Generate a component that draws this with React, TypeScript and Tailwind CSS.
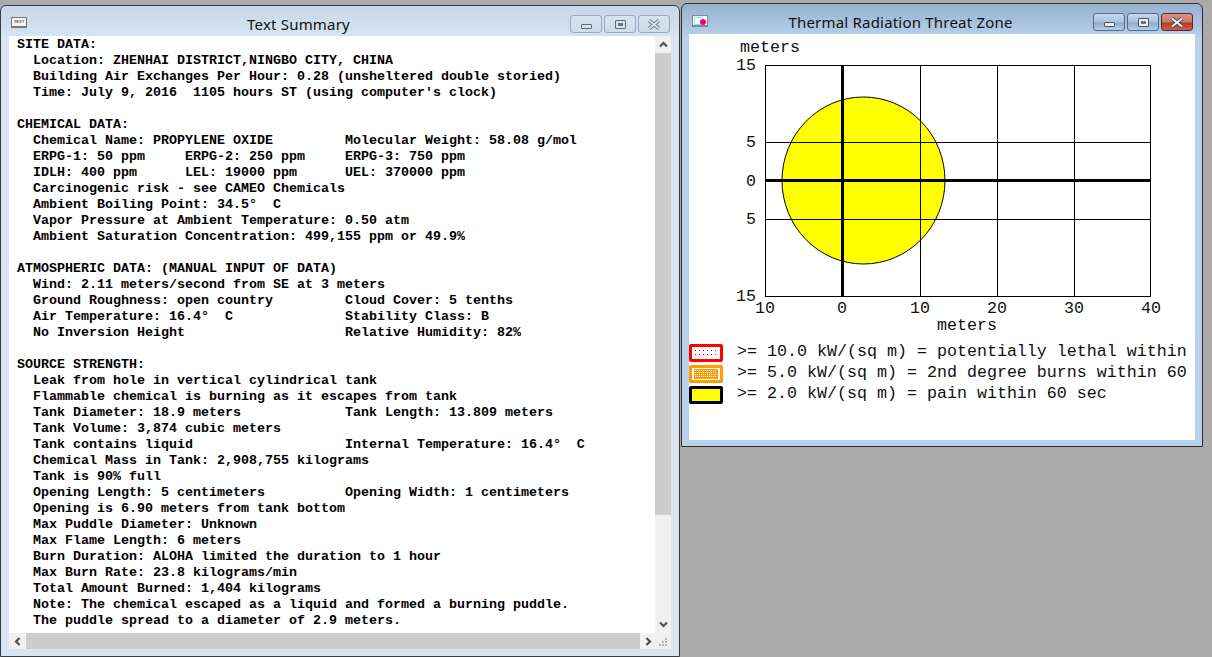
import type { ReactNode } from 'react';

const col = (a: string, b: string) => a.padEnd(41) + b;

const summary = [
  'SITE DATA:',
  '  Location: ZHENHAI DISTRICT,NINGBO CITY, CHINA',
  '  Building Air Exchanges Per Hour: 0.28 (unsheltered double storied)',
  "  Time: July 9, 2016  1105 hours ST (using computer's clock)",
  '',
  'CHEMICAL DATA:',
  col('  Chemical Name: PROPYLENE OXIDE', 'Molecular Weight: 58.08 g/mol'),
  col('  ERPG-1: 50 ppm     ERPG-2: 250 ppm', 'ERPG-3: 750 ppm'),
  col('  IDLH: 400 ppm      LEL: 19000 ppm', 'UEL: 370000 ppm'),
  '  Carcinogenic risk - see CAMEO Chemicals',
  '  Ambient Boiling Point: 34.5°  C',
  '  Vapor Pressure at Ambient Temperature: 0.50 atm',
  '  Ambient Saturation Concentration: 499,155 ppm or 49.9%',
  '',
  'ATMOSPHERIC DATA: (MANUAL INPUT OF DATA)',
  '  Wind: 2.11 meters/second from SE at 3 meters',
  col('  Ground Roughness: open country', 'Cloud Cover: 5 tenths'),
  col('  Air Temperature: 16.4°  C', 'Stability Class: B'),
  col('  No Inversion Height', 'Relative Humidity: 82%'),
  '',
  'SOURCE STRENGTH:',
  '  Leak from hole in vertical cylindrical tank',
  '  Flammable chemical is burning as it escapes from tank',
  col('  Tank Diameter: 18.9 meters', 'Tank Length: 13.809 meters'),
  '  Tank Volume: 3,874 cubic meters',
  col('  Tank contains liquid', 'Internal Temperature: 16.4°  C'),
  '  Chemical Mass in Tank: 2,908,755 kilograms',
  '  Tank is 90% full',
  col('  Opening Length: 5 centimeters', 'Opening Width: 1 centimeters'),
  '  Opening is 6.90 meters from tank bottom',
  '  Max Puddle Diameter: Unknown',
  '  Max Flame Length: 6 meters',
  '  Burn Duration: ALOHA limited the duration to 1 hour',
  '  Max Burn Rate: 23.8 kilograms/min',
  '  Total Amount Burned: 1,404 kilograms',
  '  Note: The chemical escaped as a liquid and formed a burning puddle.',
  '  The puddle spread to a diameter of 2.9 meters.',
];

function Chevron({ d }: { d: string }) {
  return (
    <svg width="9" height="9" viewBox="0 0 9 9" fill="none" stroke="#505050" strokeWidth="2.2">
      <path d={d} />
    </svg>
  );
}

function CaptionButton({ kind, active }: { kind: 'min' | 'max' | 'close'; active: boolean }) {
  const surface =
    kind === 'close' && active
      ? 'w-[32px] border-[#5a2a33] bg-[linear-gradient(#d9938a,#cf7a6c_50%,#b83a28_55%,#c9604e)]'
      : active
        ? 'w-[32px] border-[#52698a] bg-[linear-gradient(#c6d8ea,#a9c2dd_50%,#8eaccd_55%,#b5cde6)]'
        : 'w-[32px] border-[#98a9c0] bg-[linear-gradient(#d6e2ef,#cfdcea)]';
  const fill = active ? 'bg-[#eceff3] border-[#4a5568]' : 'bg-[#d8dfe8] border-[#5f6b7c]';
  return (
    <div className={`h-[18px] rounded-[3px] border flex items-center justify-center ${surface}`}>
      {kind === 'min' && <div className={`w-[11px] h-[5px] mt-[5px] border rounded-[1px] ${fill}`} />}
      {kind === 'max' && (
        <div className={`w-[11px] h-[9px] border rounded-[1px] flex items-center justify-center ${fill}`}>
          <div className="w-[5px] h-[3px] bg-[#68758a]" />
        </div>
      )}
      {kind === 'close' && (
        <svg width="14" height="11" viewBox="0 0 14 11">
          <path
            d="M2 1.5L12 9.5M12 1.5L2 9.5"
            stroke={active ? '#3d3d46' : '#6d7684'}
            strokeWidth="3.6"
          />
          <path d="M2 1.5L12 9.5M12 1.5L2 9.5" stroke={active ? '#f5f5f5' : '#d6dce4'} strokeWidth="2" />
        </svg>
      )}
    </div>
  );
}

function Caption({ icon, title, active }: { icon: ReactNode; title: string; active: boolean }) {
  return (
    <div className="flex items-center pl-[10px] pr-[9px] h-full">
      {icon}
      <div className="flex-1 text-center text-[#111] text-[15px] pt-[6px] font-['Noto_Sans',sans-serif] tracking-[0.2px]">
        {title}
      </div>
      <div className="flex gap-[2px] pt-[6px]">
        <CaptionButton kind="min" active={active} />
        <CaptionButton kind="max" active={active} />
        <CaptionButton kind="close" active={active} />
      </div>
    </div>
  );
}

function TextSummary() {
  return (
    <div className="w-[680px] h-[652px] mt-[5px] shrink-0 flex flex-col rounded-t-[6px] border border-[#3c3c3c] bg-[#d9e5f2] bg-[linear-gradient(#c8d8e9,#d9e5f2_36px)]">
      <div className="h-[30px] shrink-0">
        <Caption
          active={false}
          title="Text Summary"
          icon={
            <div className="w-[16px] h-[11px] mt-[3px] bg-[#f4f4f4] border border-[#777] border-b-2 text-[4px] leading-[8px] text-center font-['Liberation_Sans',sans-serif] text-black">
              TEXT
            </div>
          }
        />
      </div>
      <div className="flex-1 flex flex-col px-[8px] pb-[7px] min-h-0">
        <div className="flex-1 flex min-h-0">
          <div className="flex-1 bg-white overflow-hidden pl-[8px] pt-[1px] font-['Liberation_Mono',monospace] font-bold text-[13.33px] leading-[16px] text-black whitespace-pre">
            {summary.map((line, i) => (
              <div key={i} className="h-[16px]">
                {line}
              </div>
            ))}
          </div>
          {/* Vertical scrollbar */}
          <div className="w-[16px] bg-[#f0f0f0] flex flex-col">
            <div className="h-[17px] flex items-center justify-center">
              <Chevron d="M1 6.5L4.5 3L8 6.5" />
            </div>
            <div className="h-[462px] bg-[#cdcdcd]" />
            <div className="flex-1" />
            <div className="h-[17px] flex items-center justify-center">
              <Chevron d="M1 2.5L4.5 6L8 2.5" />
            </div>
          </div>
        </div>
        {/* Horizontal scrollbar */}
        <div className="h-[16px] shrink-0 flex bg-[#f0f0f0]">
          <div className="w-[17px] flex items-center justify-center">
            <Chevron d="M6.5 1L3 4.5L6.5 8" />
          </div>
          <div className="w-[614px] bg-[#cdcdcd]" />
          <div className="w-[16px] flex items-center justify-center">
            <Chevron d="M2.5 1L6 4.5L2.5 8" />
          </div>
          <div className="flex-1 flex items-end justify-end pr-[3px] pb-[2px]">
            <svg width="9" height="9" viewBox="0 0 9 9" fill="#b5b5b5">
              <rect x="6" y="0" width="2" height="2" />
              <rect x="3" y="3" width="2" height="2" />
              <rect x="6" y="3" width="2" height="2" />
              <rect x="0" y="6" width="2" height="2" />
              <rect x="3" y="6" width="2" height="2" />
              <rect x="6" y="6" width="2" height="2" />
            </svg>
          </div>
        </div>
      </div>
    </div>
  );
}

// plot coordinates are relative to the white client area (origin 689,34)
function ThreatChart() {
  const label = { fontFamily: "'Liberation Mono', monospace", fontSize: 16.67, fill: '#111' };
  return (
    <svg width="506" height="304" viewBox="0 0 506 304" className="block shrink-0" shapeRendering="crispEdges">
      <ellipse
        cx="174.5"
        cy="146.5"
        rx="81.5"
        ry="83.5"
        fill="#ffff00"
        stroke="#000"
        shapeRendering="geometricPrecision"
      />
      <rect x="76.5" y="31.5" width="385" height="231" fill="none" stroke="#000" />
      <path d="M231.5 31V262M308.5 31V262M385.5 31V262M76 108.5H462M76 185.5H462" stroke="#000" fill="none" />
      <path d="M153.5 31V262" stroke="#000" strokeWidth="3" />
      <path d="M76 146.5H462" stroke="#000" strokeWidth="3" />
      <text x="51" y="18" {...label}>meters</text>
      <text x="67" y="36" textAnchor="end" {...label}>15</text>
      <text x="67" y="113" textAnchor="end" {...label}>5</text>
      <text x="67" y="152" textAnchor="end" {...label}>0</text>
      <text x="67" y="190" textAnchor="end" {...label}>5</text>
      <text x="67" y="267" textAnchor="end" {...label}>15</text>
      <text x="76" y="279" textAnchor="middle" {...label}>10</text>
      <text x="153" y="279" textAnchor="middle" {...label}>0</text>
      <text x="231" y="279" textAnchor="middle" {...label}>10</text>
      <text x="308" y="279" textAnchor="middle" {...label}>20</text>
      <text x="385" y="279" textAnchor="middle" {...label}>30</text>
      <text x="462" y="279" textAnchor="middle" {...label}>40</text>
      <text x="278" y="296" textAnchor="middle" {...label}>meters</text>
    </svg>
  );
}

function LethalFill() {
  return (
    <svg width="28" height="12" className="block" shapeRendering="crispEdges">
      <path d="M3 3h1M7 3h1M11 3h1M15 3h1M19 3h1M23 3h1M3 7h1M7 7h1M11 7h1M15 7h1M19 7h1M23 7h1" stroke="#ff0000" transform="translate(0 .5)" />
    </svg>
  );
}

function BurnFill() {
  const rows = [2, 4, 6, 8];
  return (
    <svg width="28" height="12" className="block" shapeRendering="crispEdges">
      <rect x="2" y="1" width="24" height="10" fill="#ff9c00" />
      {rows.map((y) => (
        <path key={y} d={`M3 ${y + 0.5}H25`} stroke="#fff" strokeDasharray="1 1" />
      ))}
    </svg>
  );
}

const legend = [
  {
    text: '>= 10.0 kW/(sq m) = potentially lethal within',
    border: 'border-[#ff0000] bg-white',
    fill: <LethalFill />,
  },
  {
    text: '>= 5.0 kW/(sq m) = 2nd degree burns within 60',
    border: 'border-[#ff9c00] bg-white',
    fill: <BurnFill />,
  },
  {
    text: '>= 2.0 kW/(sq m) = pain within 60 sec',
    border: 'border-black bg-[#ffff00]',
    fill: null,
  },
];

function ThreatZone() {
  return (
    <div className="w-[522px] h-[444px] mt-[3px] shrink-0 flex flex-col rounded-t-[6px] border border-[#2c2c2c] bg-[#b9d1ea] bg-[linear-gradient(#95b1d0,#b9d1ea_34px)]">
      <div className="h-[30px] shrink-0">
        <Caption
          active
          title="Thermal Radiation Threat Zone"
          icon={
            <div className="relative w-[16px] h-[12px] mt-[4px] bg-white border border-[#888] border-b-2">
              <div className="w-[9px] h-[8px] ml-[1px] mt-[1px] border border-[#5ff]" />
              <div className="absolute right-[1px] top-[3px] w-[6px] h-[6px] rounded-full bg-[#f0008a]" />
            </div>
          }
        />
      </div>
      <div className="flex-1 min-h-0 px-[7px] pb-[6px]">
        <div className="h-full bg-white overflow-hidden">
          <ThreatChart />
          <div className="flex flex-col gap-[3px] pt-[6px] font-['Liberation_Mono',monospace] text-[16.67px] leading-[18px] text-[#111]">
            {legend.map((row) => (
              <div key={row.text} className="flex items-center whitespace-pre h-[18px]">
                <div className={`w-[34px] h-[18px] shrink-0 border-[3px] rounded-[2px] ${row.border}`}>
                  {row.fill}
                </div>
                <div className="ml-[14px] pb-[3px]">{row.text}</div>
              </div>
            ))}
          </div>
        </div>
      </div>
    </div>
  );
}

export default function App() {
  return (
    <div className="w-[1212px] h-[657px] overflow-hidden bg-[#ababab] flex gap-[1px] items-start">
      <TextSummary />
      <ThreatZone />
    </div>
  );
}
